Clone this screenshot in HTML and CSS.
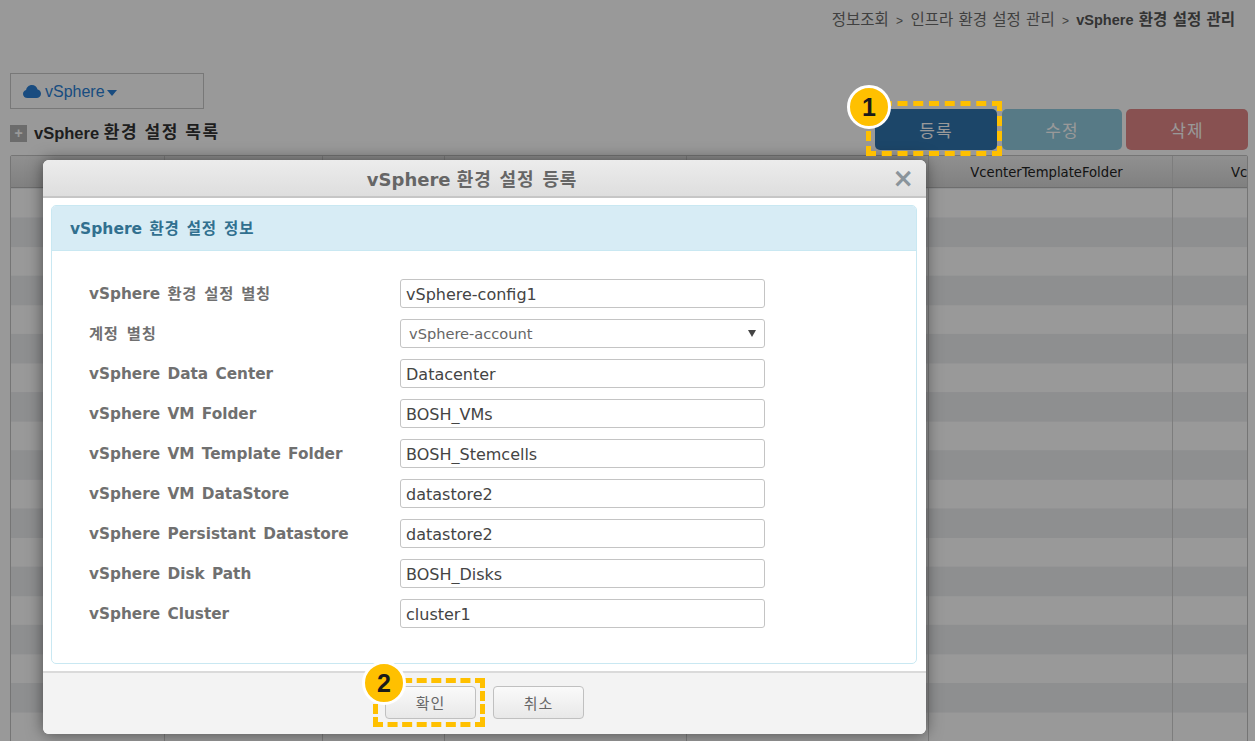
FILE: index.html
```html
<!DOCTYPE html>
<html lang="ko">
<head>
  <meta charset="UTF-8">
  <title>vSphere 환경 설정 관리</title>
  <link rel="stylesheet" href="styles.css">
</head>
<body>

  <div class="breadcrumb">정보조회 <span class="sep">&gt;</span> 인프라 환경 설정 관리 <span class="sep">&gt;</span> <b><span class="crumb-en">vSphere</span> 환경 설정 관리</b></div>

  <div class="iaas-select">
    <svg class="cloud" viewBox="0 0 18 13" width="18" height="13"><path d="M4.500 13C2 13 0 11.200 0 8.900 0 7 1.300 5.500 3.100 5 3.500 2.200 5.900 0 8.900 0c2.800 0 5.100 1.900 5.700 4.500 2 .4 3.400 2.100 3.400 4.200 0 2.400-2 4.300-4.500 4.300z"/></svg>
    <span>vSphere</span><i class="caret"></i>
  </div>

  <div class="title-row">
    <h2 class="list-title"><span class="plus">+</span>vSphere <span class="ko">환경 설정 목록</span></h2>
    <div class="actions">
      <button class="btn btn-add">등록</button>
      <button class="btn btn-edit">수정</button>
      <button class="btn btn-del">삭제</button>
    </div>
  </div>

  <div class="grid">
    <div class="grid-head">
      <div class="col c1"></div>
      <div class="col c2"></div>
      <div class="col c3"></div>
      <div class="col c4"></div>
      <div class="col c5"></div>
      <div class="col c6">VcenterTemplateFolder</div>
      <div class="col c7">Vc</div>
    </div>
    <div class="grid-body">
      <div class="col c1"></div>
      <div class="col c2"></div>
      <div class="col c3"></div>
      <div class="col c4"></div>
      <div class="col c5"></div>
      <div class="col c6"></div>
      <div class="col c7"></div>
    </div>
  </div>

  <div class="overlay"></div>

  <div class="modal">
    <div class="modal-head">vSphere <span class="ko">환경 설정 등록</span><span class="close">&times;</span></div>
    <div class="modal-body">
      <div class="panel">
        <div class="panel-head">vSphere <span class="ko">환경 설정 정보</span></div>
        <div class="panel-body">
          <div class="row"><label>vSphere <span class="ko">환경 설정 별칭</span></label><input type="text" value="vSphere-config1"></div>
          <div class="row"><label class="ko">계정 별칭</label><div class="select">vSphere-account<i></i></div></div>
          <div class="row"><label>vSphere Data Center</label><input type="text" value="Datacenter"></div>
          <div class="row"><label>vSphere VM Folder</label><input type="text" value="BOSH_VMs"></div>
          <div class="row"><label>vSphere VM Template Folder</label><input type="text" value="BOSH_Stemcells"></div>
          <div class="row"><label>vSphere VM DataStore</label><input type="text" value="datastore2"></div>
          <div class="row"><label>vSphere Persistant Datastore</label><input type="text" value="datastore2"></div>
          <div class="row"><label>vSphere Disk Path</label><input type="text" value="BOSH_Disks"></div>
          <div class="row"><label>vSphere Cluster</label><input type="text" value="cluster1"></div>
        </div>
      </div>
    </div>
    <div class="modal-foot">
      <button class="mbtn">확인</button>
      <button class="mbtn">취소</button>
    </div>
  </div>

  <!-- callouts drawn on top of the screenshot -->
  <div class="dash dash-1"></div>
  <div class="badge badge-1">1</div>
  <div class="dash dash-2"></div>
  <div class="badge badge-2">2</div>

</body>
</html>
```

FILE: styles.css
```css
html, body {
  margin: 0;
  padding: 0;
  height: 741px;
  overflow: hidden;
}

body {
  font-family: "DejaVu Sans", "Noto Sans CJK KR", sans-serif;
  font-size: 14px;
  color: #333;
  background-color: #fff;
  position: relative;
}

.ko {
  letter-spacing: 0.8px;
  word-spacing: 1px;
}

.breadcrumb {
  font-family: "Liberation Sans", "Noto Sans CJK KR", sans-serif;
  font-size: 15.5px;
  line-height: 20px;
  padding: 10px 20px 0 0;
  height: 62px;
  box-sizing: border-box;
  text-align: right;
  color: #6b6b6b;
  word-spacing: 1px;
}

.breadcrumb b {
  color: #555;
}

.crumb-en {
  font-size: 14.5px;
}

.sep {
  font-size: 12px;
  margin: 0 2px;
}

.iaas-select {
  margin-left: 10px;
  margin-top: 11px;
  width: 194px;
  height: 36px;
  border: 1px solid #c8c8c8;
  display: flex;
  align-items: center;
  padding: 1px 0 0 12px;
  box-sizing: border-box;
  color: #2a7fd5;
  font-family: "Liberation Sans", sans-serif;
  font-size: 16px;
}

.cloud {
  fill: #2a7fd5;
  margin-right: 4px;
}

.caret {
  width: 0;
  height: 0;
  border-left: 5px solid transparent;
  border-right: 5px solid transparent;
  border-top: 6px solid #2a7fd5;
  margin-left: 2px;
  margin-top: 2px;
}

.title-row {
  display: flex;
  justify-content: space-between;
  align-items: flex-start;
  height: 46px;
  padding: 0 7px 0 10px;
}

.list-title {
  margin: 14px 0 0;
  font-size: 16.5px;
  line-height: 20px;
  font-family: "Liberation Sans", "Noto Sans CJK KR", sans-serif;
  color: #333;
  display: flex;
  align-items: center;
  white-space: pre;
}

.list-title .ko {
  font-size: 17px;
  letter-spacing: 1.6px;
  word-spacing: 0;
}

.plus {
  width: 17px;
  height: 17px;
  background-color: #b5b5b5;
  color: #fff;
  font-size: 14px;
  font-weight: bold;
  line-height: 17px;
  text-align: center;
  margin-right: 7px;
}

.actions {
  display: flex;
}

.btn {
  width: 122px;
  height: 41px;
  border: none;
  border-radius: 5px;
  color: #fff;
  font-family: "Noto Sans CJK KR", sans-serif;
  font-size: 17px;
  letter-spacing: 1px;
}

.btn-add { background-color: #2f76b0; }
.btn-edit { background-color: #91cbe0; width: 120px; margin: 0 4px 0 5px; }
.btn-del { background-color: #e38887; }

.grid {
  margin: 0 7px 0 10px;
  border: 1px solid #c4c4c4;
  border-radius: 2px 2px 0 0;
  height: 600px;
}

.grid-head,
.grid-body {
  display: flex;
}

.grid-head {
  height: 31px;
  border-bottom: 1px solid #b8b8b8;
  background: linear-gradient(#f0f0f0, #d6d6d6);
  font-size: 13.2px;
  line-height: 33px;
  color: #222;
  text-align: center;
  overflow: hidden;
}

.grid-body {
  height: 568px;
  background: linear-gradient(#fff 50%, #edeef1 50%) 0 0.9px / 100% 58.2px;
}

.col {
  border-right: 1px solid #d0d0d0;
  box-sizing: border-box;
  flex-shrink: 0;
  white-space: nowrap;
}

.c1 { width: 154px; }
.c2 { width: 158px; }
.c3 { width: 122px; }
.c4 { width: 242px; }
.c5 { width: 242px; }
.c6 { width: 244px; padding-right: 8px; }
.c7 { width: 76px; border-right: none; text-align: left; padding-left: 58px; }

.overlay {
  position: absolute;
  inset: 0;
  background-color: rgba(0, 0, 0, 0.4);
}

.modal {
  position: absolute;
  left: 43px;
  top: 160px;
  width: 883px;
  height: 574px;
  background-color: #fff;
  border-radius: 6px;
  box-shadow: 0 0 16px rgba(0, 0, 0, 0.5);
  display: flex;
  flex-direction: column;
  overflow: hidden;
}

.modal-head {
  height: 36px;
  line-height: 40px;
  flex-shrink: 0;
  text-align: center;
  padding-right: 25px;
  font-size: 18px;
  font-weight: bold;
  color: #666;
  background: linear-gradient(#ececec, #dedede);
  border-bottom: 2px solid #c6c6c6;
  position: relative;
}

.close {
  position: absolute;
  right: 12px;
  top: 0;
  font-size: 26px;
  line-height: 36px;
  color: #8a949b;
}

.modal-body {
  flex: 1;
  padding: 7px 9px 7px 8px;
  min-height: 0;
}

.panel {
  height: 100%;
  box-sizing: border-box;
  border: 1px solid #c9e8f2;
  border-radius: 5px;
  overflow: hidden;
}

.panel-head {
  height: 44px;
  line-height: 46px;
  padding-left: 18px;
  background-color: #d7ecf5;
  border-bottom: 1px solid #c9e8f2;
  color: #31708f;
  font-size: 15.5px;
  font-weight: bold;
  word-spacing: 2px;
}

.panel-body {
  padding-top: 28px;
  display: flex;
  flex-direction: column;
  gap: 10px;
}

.row {
  display: flex;
  align-items: center;
  height: 30px;
  padding-left: 36px;
}

.row label {
  width: 312px;
  padding-left: 1px;
  box-sizing: border-box;
  font-size: 15.3px;
  font-weight: bold;
  line-height: 20px;
  height: 20px;
  color: #707070;
  flex-shrink: 0;
  word-spacing: 2px;
  white-space: nowrap;
}

.row input,
.select {
  width: 365px;
  height: 29px;
  margin-bottom: 1px;
  box-sizing: border-box;
  border: 1px solid #c4c4c4;
  border-radius: 3px;
  font-family: "DejaVu Sans", sans-serif;
  font-size: 16px;
  color: #444;
  padding: 1px 5px 0;
}

.select {
  display: flex;
  justify-content: space-between;
  align-items: center;
  padding: 0 8px;
  font-size: 14.6px;
  color: #666;
}

.select i {
  width: 0;
  height: 0;
  border-left: 4px solid transparent;
  border-right: 4px solid transparent;
  border-top: 7px solid #444;
}

.modal-foot {
  height: 63px;
  flex-shrink: 0;
  box-sizing: border-box;
  border-top: 2px solid #dadada;
  background-color: #f3f3f3;
  display: flex;
  justify-content: center;
  align-items: flex-start;
  gap: 17px;
  padding-top: 13px;
}

.mbtn {
  width: 91px;
  height: 33px;
  border: 1px solid #c0c0c0;
  border-radius: 4px;
  background: linear-gradient(#fafafa, #e8e8e8);
  color: #666;
  font-family: "Noto Sans CJK KR", sans-serif;
  font-size: 15px;
  letter-spacing: 1px;
}

.dash {
  position: absolute;
  box-sizing: border-box;
  border: 5px dashed #ffc000;
}

.dash-1 { left: 866px; top: 101px; width: 136px; height: 55px; }
.dash-2 { left: 373px; top: 678px; width: 112px; height: 49px; }

.badge {
  position: absolute;
  box-sizing: border-box;
  width: 44px;
  height: 44px;
  border: 3px solid #fff;
  border-radius: 50%;
  background-color: #ffc000;
  color: #1a1a1a;
  font-family: "Liberation Sans", sans-serif;
  font-weight: bold;
  font-size: 25px;
  line-height: 38px;
  text-align: center;
}

.badge-1 { left: 847px; top: 85px; }
.badge-2 { left: 362px; top: 661px; }
```
